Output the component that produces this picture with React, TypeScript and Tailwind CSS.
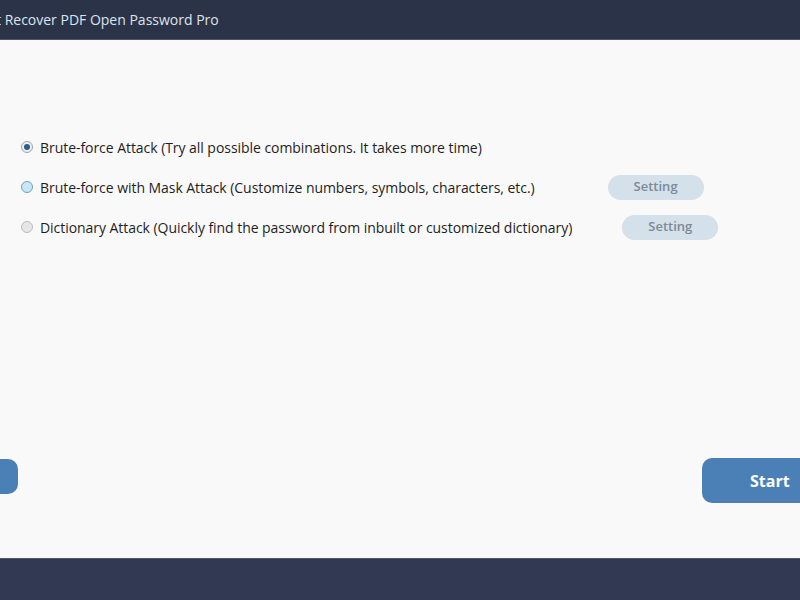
export default function App() {
  const options = [
    { label: "Brute-force Attack (Try all possible combinations. It takes more time)", state: "checked", setting: null },
    { label: "Brute-force with Mask Attack (Customize numbers, symbols, characters, etc.)", state: "hover", setting: "ml-[73px]" },
    { label: "Dictionary Attack (Quickly find the password from inbuilt or customized dictionary)", state: "idle", setting: "ml-[50px]" },
  ];

  return (
    <div className="w-[800px] h-[600px] flex flex-col bg-[#f9f9f9] overflow-hidden text-[#1e1e1e]" style={{ fontFamily: '"Open Sans", "Noto Sans", sans-serif' }}>
      <div className="h-[40px] shrink-0 bg-[#2b3349] border-b border-[#4a5468] flex items-center">
        <span className="text-[14px] text-[#dfe3ea] ml-[-4px] whitespace-nowrap">t Recover PDF Open Password Pro</span>
      </div>

      <div className="flex-1 flex flex-col">
        <div className="pt-[87px] pl-[21px] flex flex-col">
          {options.map((o) => (
            <div key={o.label} className="h-[40px] flex items-center">
              <span
                className={
                  "w-[12px] h-[12px] rounded-full border flex items-center justify-center shrink-0 " +
                  (o.state === "checked"
                    ? "border-[#9aa3ad] bg-[#eef1f4]"
                    : o.state === "hover"
                    ? "border-[#6fa0c0] bg-[#c9e6f5]"
                    : "border-[#b8bcc0] bg-[#e6e6e6]")
                }
              >
                {o.state === "checked" && <span className="w-[6px] h-[6px] rounded-full bg-[#2e5d8a]" />}
              </span>
              <span className="ml-[7px] text-[14px] tracking-[-0.05px] whitespace-nowrap">{o.label}</span>
              {o.setting && (
                <span className={o.setting + " w-[96px] h-[25px] rounded-full bg-[#d4e0ea] text-[#7d8a98] text-[13px] font-semibold flex items-center justify-center"}>
                  Setting
                </span>
              )}
            </div>
          ))}
        </div>

        <div className="mt-auto mb-[55px] flex justify-between items-start">
          <div className="w-[60px] h-[35px] mt-[1px] ml-[-42px] rounded-[10px] bg-[#4a80b5]" />
          <div className="w-[120px] h-[45px] mr-[-22px] rounded-[10px] bg-[#4a80b5] text-white text-[16px] font-bold flex items-center pl-[48px]">
            Start
          </div>
        </div>
      </div>

      <div className="h-[42px] shrink-0 bg-[#313a52] border-t border-[#4d5766]" />
    </div>
  );
}
